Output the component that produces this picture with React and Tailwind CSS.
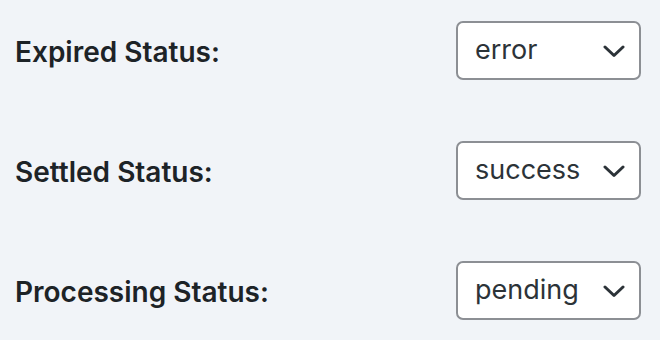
import React from 'react'

const rows = [
  { label: 'Expired Status:', value: 'error' },
  { label: 'Settled Status:', value: 'success' },
  { label: 'Processing Status:', value: 'pending' },
]

function Chevron() {
  return (
    <svg width="22" height="14" viewBox="0 0 22 14" fill="none" className="shrink-0">
      <path d="M2 3l9 8.5L20 3" stroke="#2c3338" strokeWidth="3" strokeLinecap="round" strokeLinejoin="round" />
    </svg>
  )
}

export default function App() {
  return (
    <div className="w-[660px] h-[340px] bg-[#f1f4f8] pt-[21px] pl-[15px] pr-[19px] flex flex-col gap-[61px] text-[#1d2327] font-['Inter','Liberation_Sans',sans-serif]">
      {rows.map(r => (
        <div key={r.label} className="flex items-center justify-between">
          <span className="text-[28px] font-semibold pt-[3px]">{r.label}</span>
          <div className="w-[185px] h-[59px] bg-white border-2 border-[#8c8f94] rounded-[7px] flex items-center justify-between pl-[17px] pr-[14px]">
            <span className="text-[27px] text-[#2c3338]">{r.value}</span>
            <Chevron />
          </div>
        </div>
      ))}
    </div>
  )
}
